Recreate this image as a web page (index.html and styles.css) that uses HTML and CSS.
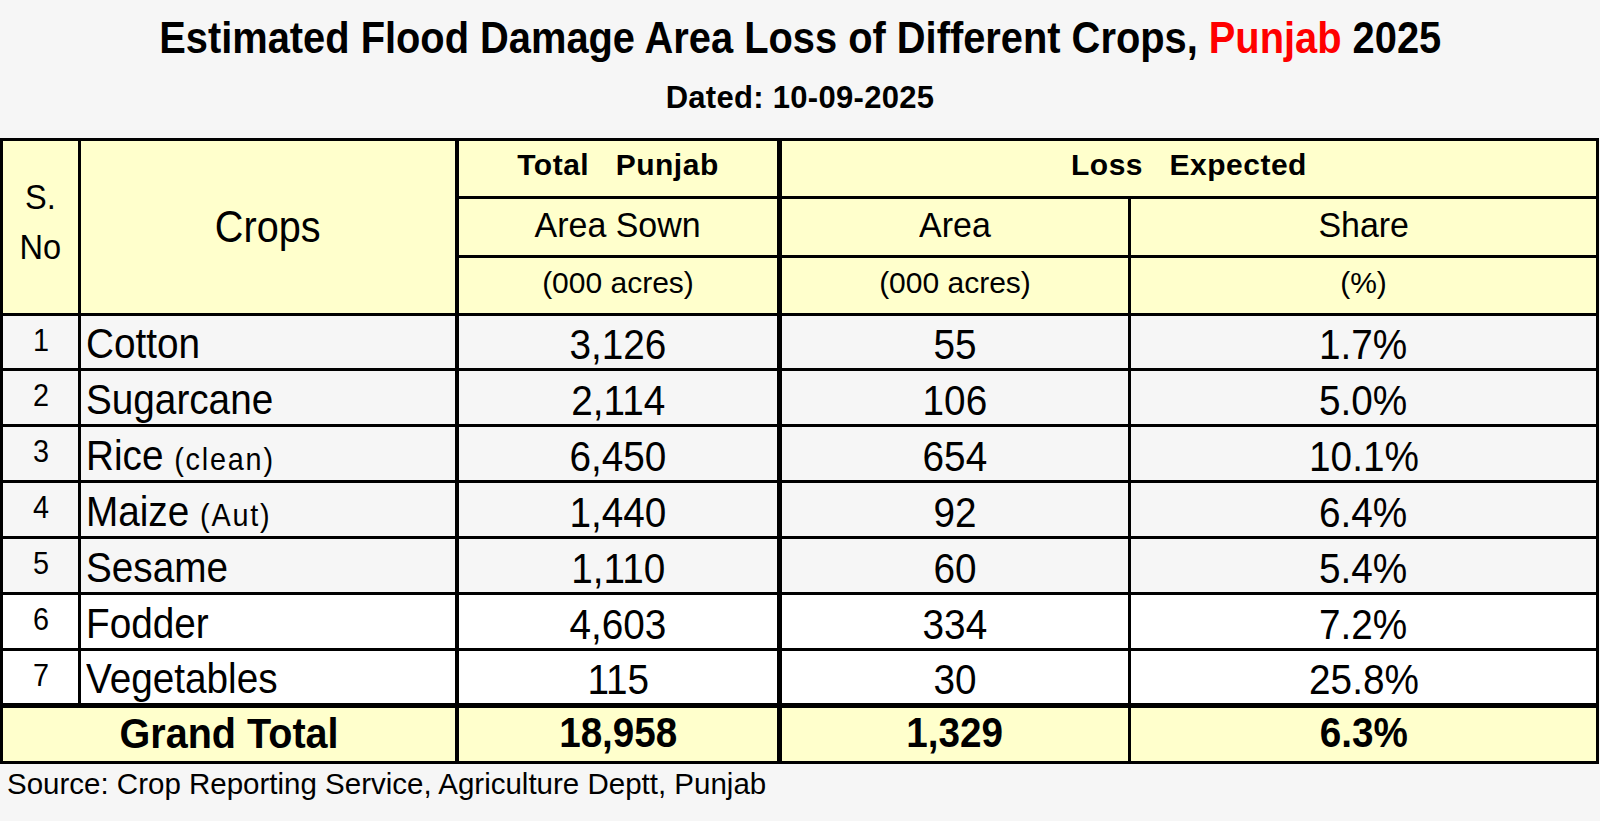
FILE: index.html
```html
<!DOCTYPE html>
<html lang="en">
<head>
<meta charset="utf-8">
<title>Estimated Flood Damage Area Loss of Different Crops, Punjab 2025</title>
<link rel="stylesheet" href="styles.css">
</head>
<body>
<main class="page">
  <header class="heading">
    <h1 class="title"><span class="t">Estimated Flood Damage Area Loss of Different Crops, <span class="red">Punjab</span> 2025</span></h1>
    <p class="dated">Dated: 10-09-2025</p>
  </header>

  <div class="sheet">
    <div class="c hd sno"><span class="t">S.<br>No</span></div>
    <div class="c hd crops-h b4"><span class="t">Crops</span></div>
    <div class="c hd grp b5">Total&nbsp;&nbsp;&nbsp;Punjab</div>
    <div class="c hd grp loss">Loss&nbsp;&nbsp;&nbsp;Expected</div>

    <div class="c hd sub b5"><span class="t">Area Sown</span></div>
    <div class="c hd sub"><span class="t">Area</span></div>
    <div class="c hd sub"><span class="t">Share</span></div>

    <div class="c hd unit b5">(000 acres)</div>
    <div class="c hd unit">(000 acres)</div>
    <div class="c hd unit">(%)</div>

    <div class="c n"><span class="t">1</span></div>
    <div class="c crop b4"><span class="t">Cotton</span></div>
    <div class="c v b5"><span class="t">3,126</span></div>
    <div class="c v"><span class="t">55</span></div>
    <div class="c v"><span class="t">1.7%</span></div>

    <div class="c n"><span class="t">2</span></div>
    <div class="c crop b4"><span class="t">Sugarcane</span></div>
    <div class="c v b5"><span class="t">2,114</span></div>
    <div class="c v"><span class="t">106</span></div>
    <div class="c v"><span class="t">5.0%</span></div>

    <div class="c n"><span class="t">3</span></div>
    <div class="c crop b4"><span class="t">Rice <span class="note">(clean)</span></span></div>
    <div class="c v b5"><span class="t">6,450</span></div>
    <div class="c v"><span class="t">654</span></div>
    <div class="c v"><span class="t">10.1%</span></div>

    <div class="c n"><span class="t">4</span></div>
    <div class="c crop b4"><span class="t">Maize <span class="note">(Aut)</span></span></div>
    <div class="c v b5"><span class="t">1,440</span></div>
    <div class="c v"><span class="t">92</span></div>
    <div class="c v"><span class="t">6.4%</span></div>

    <div class="c n"><span class="t">5</span></div>
    <div class="c crop b4"><span class="t">Sesame</span></div>
    <div class="c v b5"><span class="t">1,110</span></div>
    <div class="c v"><span class="t">60</span></div>
    <div class="c v"><span class="t">5.4%</span></div>

    <div class="c n w"><span class="t">6</span></div>
    <div class="c crop b4 w"><span class="t">Fodder</span></div>
    <div class="c v b5 w"><span class="t">4,603</span></div>
    <div class="c v w"><span class="t">334</span></div>
    <div class="c v w"><span class="t">7.2%</span></div>

    <div class="c n w last"><span class="t">7</span></div>
    <div class="c crop b4 w last"><span class="t">Vegetables</span></div>
    <div class="c v b5 w last"><span class="t">115</span></div>
    <div class="c v w last"><span class="t">30</span></div>
    <div class="c v w last"><span class="t">25.8%</span></div>

    <div class="c tot gt b4"><span class="t">Grand Total</span></div>
    <div class="c tot b5"><span class="t">18,958</span></div>
    <div class="c tot"><span class="t">1,329</span></div>
    <div class="c tot"><span class="t">6.3%</span></div>
  </div>

  <p class="source">Source: Crop Reporting Service, Agriculture Deptt, Punjab</p>
</main>
</body>
</html>
```

FILE: styles.css
```css
* { box-sizing: border-box; }

html, body {
  margin: 0;
  padding: 0;
  background: #f6f6f6;
}

body {
  font-family: "Liberation Sans", Arial, sans-serif;
  color: #000;
}

.page {
  width: 1600px;
}

.t {
  display: inline-block;
  white-space: nowrap;
  transform: scaleX(var(--sx, 1));
  transform-origin: center center;
}

/* ---------- heading ---------- */
.heading {
  padding-top: 14px;
  padding-bottom: 23px;
  text-align: center;
}

.title {
  margin: 0;
  font-size: 44px;
  line-height: 48px;
  font-weight: 700;
  --sx: 0.905;
}

.red { color: #ff0000; }

.dated {
  margin: 18px 0 0;
  font-size: 31px;
  line-height: 35px;
  font-weight: 700;
  letter-spacing: 0.3px;
}

/* ---------- table ---------- */
.sheet {
  display: grid;
  grid-template-columns: 78px 378px 323px 349px 468px;
  grid-template-rows: 58px 59px 58px 55px 56px 56px 56px 56px 56px 57px 56px;
  width: 1599px;
  border-left: 3px solid #000;
  border-top: 3px solid #000;
}

.c {
  display: flex;
  align-items: center;
  justify-content: center;
  border-right: 3px solid #000;
  border-bottom: 3px solid #000;
  background: #f6f6f6;
  overflow: hidden;
}

.b4 { border-right-width: 4px; }
.b5 { border-right-width: 5px; }
.w { background: #ffffff; }
.last { border-bottom-width: 5px; }

.hd { background: #ffffcc; }

.sno {
  grid-row: 1 / 4;
  grid-column: 1;
  font-size: 35px;
  line-height: 50px;
  text-align: center;
  padding-bottom: 10px;
  --sx: 0.93;
}

.crops-h {
  grid-row: 1 / 4;
  grid-column: 2;
  font-size: 44px;
  --sx: 0.9;
}

.grp {
  font-size: 30px;
  font-weight: 700;
  letter-spacing: 0.5px;
  padding-bottom: 7px;
  white-space: nowrap;
}

.loss { grid-column: 4 / 6; }

.sub {
  font-size: 35px;
  padding-bottom: 5px;
  --sx: 0.97;
}

.unit {
  font-size: 30px;
  padding-bottom: 6px;
}

.n {
  font-size: 32px;
  padding-bottom: 4px;
  --sx: 0.9;
}

.crop {
  justify-content: flex-start;
  padding-left: 5px;
  padding-top: 3px;
  font-size: 43px;
}

.crop .t {
  --sx: 0.9;
  transform-origin: left center;
}

.note {
  font-size: 32px;
  letter-spacing: 2px;
}

.v {
  font-size: 43px;
  padding-top: 5px;
  --sx: 0.9;
}

.tot {
  background: #ffffcc;
  font-size: 42px;
  font-weight: 700;
  padding-bottom: 3px;
  --sx: 0.92;
}

.gt {
  grid-column: 1 / 3;
  font-size: 43px;
}

/* ---------- footer ---------- */
.source {
  margin: 3px 0 0;
  padding-left: 7px;
  font-size: 29.5px;
  line-height: 33px;
}
```
